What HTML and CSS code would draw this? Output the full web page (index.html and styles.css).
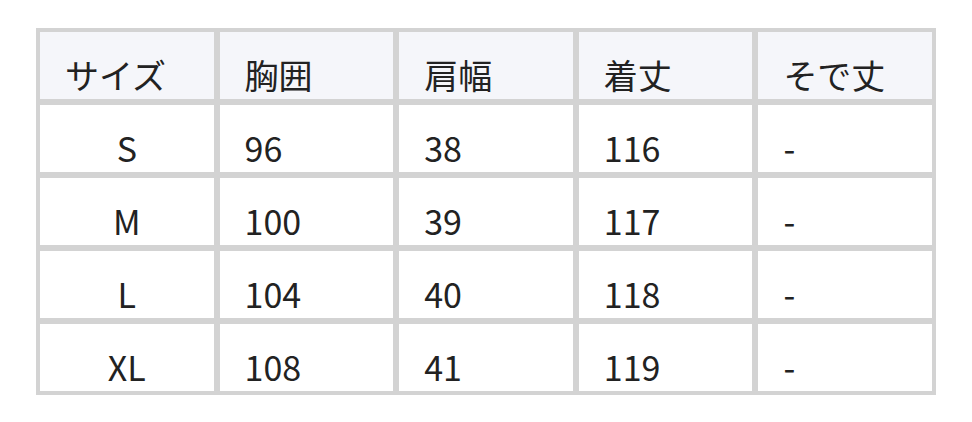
FILE: index.html
```html
<!DOCTYPE html>
<html lang="ja">
<head>
<meta charset="utf-8">
<link rel="stylesheet" href="styles.css">
</head>
<body>
<div class="wrap">
<table class="size-table">
  <thead>
    <tr><th>サイズ</th><th>胸囲</th><th>肩幅</th><th>着丈</th><th>そで丈</th></tr>
  </thead>
  <tbody>
    <tr><td class="size">S</td><td>96</td><td>38</td><td>116</td><td>-</td></tr>
    <tr><td class="size">M</td><td>100</td><td>39</td><td>117</td><td>-</td></tr>
    <tr><td class="size">L</td><td>104</td><td>40</td><td>118</td><td>-</td></tr>
    <tr><td class="size">XL</td><td>108</td><td>41</td><td>119</td><td>-</td></tr>
  </tbody>
</table>
</div>
</body>
</html>
```
FILE: styles.css
```css
html, body {
  margin: 0;
  padding: 0;
  background: #ffffff;
}
.wrap {
  padding: 28px 36px;
}
.size-table {
  width: 900px;
  table-layout: fixed;
  border-collapse: separate;
  border-spacing: 0;
  border: 1px solid #d3d3d3;
  font-family: "Noto Sans CJK JP", "Noto Sans", sans-serif;
  font-size: 34px;
  color: #222222;
}
.size-table th,
.size-table td {
  border: 3px solid #d3d3d3;
  padding: 21px 24px 2px 25px;
  line-height: 44px;
  height: 44px;
  text-align: left;
  font-weight: 400;
  vertical-align: top;
  white-space: nowrap;
}
.size-table th {
  background: #f5f6fa;
}
.size-table td.size {
  text-align: center;
  padding-left: 24px;
  padding-right: 24px;
}
```
